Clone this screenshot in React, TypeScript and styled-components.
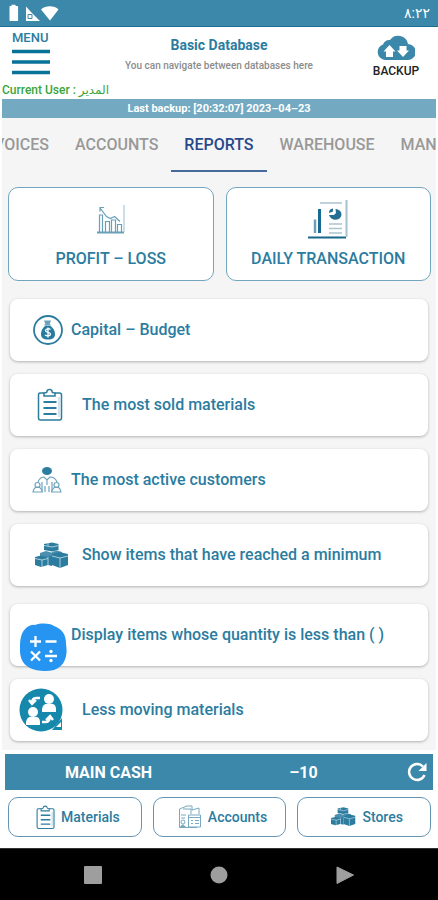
import React from "react";
import styled, { createGlobalStyle } from "styled-components";

const teal = "#2b7c9f";
const bar = "#3c88ab";

const GlobalStyle = createGlobalStyle`
  *, *::before, *::after { box-sizing: border-box; }
  body { margin: 0; background: #fff; font-family: Roboto, "Noto Sans", "DejaVu Sans", sans-serif; }
  button { font: inherit; color: inherit; background: none; border: 0; padding: 0; cursor: pointer; }
  svg { display: block; flex: none; }
  h1, p { margin: 0; }
`;

const Screen = styled.div`
  display: flex;
  flex-direction: column;
  min-height: 100vh;
  overflow: hidden;
  background: #fff;
`;

const StatusBar = styled.div`
  display: flex;
  align-items: center;
  justify-content: space-between;
  height: 27px;
  padding: 0 8px;
  background: ${bar};
  border-bottom: 1px solid #1c7096;
  color: #fff;
  font-size: 14px;
`;

const Header = styled.header`
  display: grid;
  grid-template-columns: 84px 1fr 84px;
  padding-top: 3px;
  height: 57px;
`;

const MenuButton = styled.button`
  display: flex;
  flex-direction: column;
  align-items: flex-start;
  padding-left: 12px;
  gap: 4px;
  color: ${teal};
  font-size: 13px;
  line-height: 15px;
  font-weight: 500;
`;

const Heading = styled.div`
  display: flex;
  flex-direction: column;
  align-items: center;
  padding-top: 7px;
  gap: 4px;
  white-space: nowrap;
`;

const Title = styled.h1`
  color: ${teal};
  font-size: 14px;
  line-height: 17px;
  font-weight: 700;
`;

const Subtitle = styled.p`
  color: #8c8c8c;
  font-size: 10px;
  line-height: 16px;
  font-weight: 500;
`;

const BackupButton = styled.button`
  display: flex;
  flex-direction: column;
  align-items: center;
  padding-top: 5px;
  gap: 3px;
  color: #222;
  font-size: 12px;
  line-height: 14px;
  font-weight: 500;
`;

const UserLine = styled.p`
  padding: 0 2px;
  color: #3ba53b;
  font-size: 12px;
  line-height: 12px;
  height: 15px;
  font-weight: 500;
  white-space: nowrap;
`;

const LastBackup = styled.p`
  margin: 0 2px;
  background: #73a9c1;
  color: #fff;
  text-align: center;
  font-size: 11px;
  line-height: 19px;
  font-weight: 700;
`;

const Body = styled.main`
  display: flex;
  flex-direction: column;
  margin: 0 2px;
  padding-bottom: 9px;
  background: #f5f5f5;
`;

const Tabs = styled.nav`
  display: flex;
  height: 54px;
  margin-right: -2px;
  overflow: hidden;
`;

const Tab = styled.button<{ $active?: boolean; $leading?: boolean }>`
  display: flex;
  flex: none;
  align-items: center;
  justify-content: flex-end;
  width: ${(p) => (p.$leading ? "60px" : "auto")};
  overflow: hidden;
  padding: 0 13px;
  padding-left: ${(p) => (p.$leading ? "0" : "13px")};
  border-bottom: 2px solid ${(p) => (p.$active ? "#456a9b" : "transparent")};
  color: ${(p) => (p.$active ? "#27498c" : "#999")};
  font-size: 16px;
  font-weight: 500;
`;

const Tiles = styled.div`
  display: grid;
  grid-template-columns: 1fr 1fr;
  gap: 12px;
  padding: 15px 5px 18px 6px;
`;

const Tile = styled.button`
  display: flex;
  flex-direction: column;
  align-items: center;
  justify-content: flex-end;
  gap: 10px;
  height: 94px;
  padding-bottom: 11px;
  background: #fff;
  border: 1px solid #72a6bf;
  border-radius: 10px;
  color: ${teal};
  font-size: 16px;
  line-height: 20px;
  font-weight: 500;
`;

const TileIcon = styled.span`
  display: flex;
  align-items: center;
  height: 40px;
`;

const List = styled.div`
  display: flex;
  flex-direction: column;
  gap: 13px;
  padding: 0 8px;

  & + & { padding-top: 18px; }
`;

const Row = styled.button<{ $indent?: boolean }>`
  position: relative;
  display: grid;
  grid-template-columns: ${(p) => (p.$indent ? "72px" : "61px")} 1fr;
  align-items: center;
  height: 62px;
  background: #fff;
  border-radius: 8px;
  box-shadow: 0 1px 3px rgba(0, 0, 0, 0.28);
  color: ${teal};
  font-size: 16px;
  line-height: 20px;
  font-weight: 500;
  text-align: left;
`;

const RowIcon = styled.span<{ $inset?: number }>`
  display: flex;
  padding-left: ${(p) => p.$inset ?? 22}px;
`;

const Floating = styled.span`
  position: absolute;
  left: 9px;
  top: 19px;
  z-index: 1;
`;

const CashBar = styled.div`
  display: grid;
  grid-template-columns: 1fr 1fr 32px;
  align-items: center;
  height: 36px;
  margin: 4px 5px 0;
  padding-left: 6px;
  background: ${bar};
  color: #fff;
  font-size: 16px;
  font-weight: 700;
  text-align: center;
`;

const RefreshButton = styled.button`
  display: flex;
  justify-content: center;
`;

const Shortcuts = styled.div`
  display: grid;
  grid-template-columns: repeat(3, 1fr);
  gap: 11px;
  padding: 7px 7px 11px 8px;
`;

const Shortcut = styled.button`
  display: flex;
  align-items: center;
  justify-content: center;
  gap: 6px;
  height: 40px;
  padding-left: 6px;
  border: 1px solid #6496b4;
  border-radius: 10px;
  color: ${teal};
  font-size: 14px;
  font-weight: 500;
`;

const NavBar = styled.nav`
  display: flex;
  flex: 1;
  align-items: center;
  justify-content: center;
  gap: 108px;
  min-height: 52px;
  background: #000;
  border-top: 1px solid #333;
`;

const StatusIcons = () => (
  <svg width="52" height="18" viewBox="0 0 52 18" fill="#fff">
    <path d="M3.500 2V.8h4V2h1.6c.6 0 1 .4 1 1v13c0 .6-.4 1-1 1H2.500c-.6 0-1-.4-1-1V3c0-.6.4-1 1-1z" />
    <path d="M18 2.500V17h14L23 8z" />
    <path d="M20 10.500h4v4h-4z" fill="none" stroke={bar} strokeWidth="1" />
    <path d="M33 5.500C37.500 1.200 46.500 1.200 50.500 5.500L42 16.500z" />
  </svg>
);

const MenuLines = () => (
  <svg width="38" height="26" viewBox="0 0 38 26" stroke="#087298" strokeWidth="3.500">
    <path d="M0 2.500h38M0 13h38M0 23.500h38" />
  </svg>
);

const CloudIcon = () => (
  <svg width="38" height="26" viewBox="0 0 38 26">
    <path d="M8 25a8 8 0 0 1-2-15.500A7 7 0 0 1 13 5a10 10 0 0 1 18 4 8 8 0 0 1-.5 16z" fill={bar} />
    <path d="m12.500 10 6 6.500h-2.500V22H9v-5.500H6.500zM26 22l-6-6.500h2.500V11h7v4.500H32z" fill="#fff" />
  </svg>
);

const ProfitIcon = () => (
  <svg width="30" height="30" viewBox="0 0 30 30" fill="none" stroke="#689fb9" strokeWidth="1.200">
    <path d="M1 28.500h27" strokeWidth="2" />
    <path d="M3.500 28V11h3v17M9.500 28V17.500h4V28M15.500 28V16h4v12M21.500 28v-7.500h4V28" />
    <path d="m4 4 6.500 8.500 4 2 4-2 5.500 5M4 7.500V3.500h4" />
    <path d="M28 1v27" stroke="#a9c9d8" />
  </svg>
);

const DailyIcon = () => (
  <svg width="40" height="40" viewBox="0 0 40 40" fill="none">
    <path d="M0 38.500h38" stroke="#1a668b" strokeWidth="2" />
    <path d="M38.500 1v37" stroke="#a4c2d0" strokeWidth="2" />
    <path d="M12 4h22M21 25h13M21 29.500h13M21 34h13" stroke="#aac4d0" strokeWidth="1.500" />
    <path d="M11.500 10v24" stroke="#176b92" strokeWidth="3" />
    <path d="M7 20.500V34" stroke="#6f9fb5" strokeWidth="2.500" />
    <path d="M27.500 10c5 .5 7 4 5.500 7.500-2.500 5-10.500 4-12-1.500h5l2-2z" fill="#236f94" />
    <path d="M21 14c0-2.500 1-4 4-4.500v3z" fill="#236f94" />
  </svg>
);

const MoneyIcon = () => (
  <svg width="32" height="32" viewBox="0 0 32 32" fill="none">
    <circle cx="16" cy="16" r="14" stroke={teal} strokeWidth="1.800" />
    <path d="M12 6.500h7l-1.500 4h-4z" fill="#6aa1bb" />
    <path d="M12.500 11h6" stroke={teal} />
    <path d="M13 12h5.500c3 2 4.500 5 4.500 8 0 4-2.500 5.500-7 5.500s-7-1.500-7-5.500c0-3 1.500-6 4-8z" fill="#277b9f" />
    <path d="M18.500 15.500c-2-1.500-5-.7-5 1.200 0 2 5 1.200 5 3.300 0 2-3.500 2.500-5.500 1M16 13.500v10" stroke="#fff" strokeWidth="1.300" />
  </svg>
);

const ClipboardIcon = ({ size = 34 }: { size?: number }) => (
  <svg width={(size * 26) / 34} height={size} viewBox="0 0 26 34" fill="none" stroke={teal} strokeWidth="1.500">
    <path d="M7 5H3Q1.500 5 1.500 7v23q0 2 2 2h19q2 0 2-2V7q0-2-2-2H18" />
    <path d="M7 8V5q3 0 3-1.500Q10 1.500 12.500 1.500T15 3.500Q15 5 18 5v3z" />
    <path d="M6.500 14h13M6.500 20h13M6.500 26h13" strokeWidth="2" />
    <path d="M22 9v20" stroke="#a7c8d8" strokeWidth="1" />
  </svg>
);

const CustomerIcon = () => (
  <svg width="30" height="28" viewBox="0 0 30 28" fill="none" stroke="#6fa4bd" strokeWidth="1.200">
    <ellipse cx="15" cy="5" rx="5" ry="4" fill={teal} stroke="none" />
    <path d="M6 16q2-5 6-5l3 3 3-3q5 0 7 5M15 14v5M10 16v9M20 16v9M13 20v6M17 20v6" />
    <circle cx="5.500" cy="19" r="2.500" />
    <circle cx="24.500" cy="19" r="2.500" />
    <path d="M1 26q1-5 4.500-5t5 5zM19.500 26q1.500-5 5-5t4.500 5z" />
  </svg>
);

const BoxesIcon = ({ size = 34 }: { size?: number }) => (
  <svg width={size} height={(size * 26) / 34} viewBox="0 0 34 26" fill={teal}>
    <path d="m9 2 8-1.500L23.500 2v6L17 9.500 9 8z" />
    <path d="m5 11 6-2 7 2v4H5zM17 10l5-1.500 5 1.500v2H17z" fill="#4c8faf" />
    <path d="m0 15 6-1.500 7 1.500v8l-7 2-6-2z" />
    <path d="m12 15 5-1.500V24l-4-1z" />
    <path d="m17 12 7-2 9 2v11l-8 3-8-3z" />
    <path d="M9 3.500 17 5l6.500-1.500M13 1v3M0 16.500 7 18l6-1.500M7 18v7M17 14l8 2 8-2M25 16v10M13 15v8" fill="none" stroke="#c8dfe9" strokeWidth=".8" />
  </svg>
);

const CalculatorIcon = () => (
  <svg width="49" height="49" viewBox="0 0 49 49">
    <path d="M16 2c6-2 14-2 19 1 8 3 12 8 12 18 2 12-1 22-12 26-8 2-18 1-24-2C3 41 .5 34 1 24 1 14 3 6 11 2.500q3-1 5-.5z" fill="#2595f1" />
    <path d="M11 18.500h11M16.500 13v11M26.500 18.500h11M12 28.500l9 9m0-9-9 9M26 33h12" stroke="#fff" strokeWidth="2.300" />
    <circle cx="32" cy="28.500" r="1.700" fill="#fff" />
    <circle cx="32" cy="37.500" r="1.700" fill="#fff" />
  </svg>
);

const ExchangeIcon = () => (
  <svg width="45" height="45" viewBox="0 0 45 45">
    <circle cx="22" cy="22" r="21.500" fill="#1688ac" />
    <path d="M43 30v12H33z" fill="#1688ac" />
    <g fill="#fff">
      <circle cx="30" cy="11" r="5" />
      <path d="M23 24v-3q1-6 7-5 7-1 7 5v3z" />
      <circle cx="14" cy="24" r="5" />
      <path d="M7 37v-3q1-6 7-5 7-1 7 5v3z" />
      <path d="m37 39 5-5v5z" />
    </g>
    <path d="M21 10h-4q-4 0-4 5m-3-3 3 4 4-4M23 34h4q4 0 4-6m-4 4 4-4 3 4" fill="none" stroke="#fff" strokeWidth="2.400" />
  </svg>
);

const AccountsIcon = () => (
  <svg width="24" height="24" viewBox="0 0 24 24" fill="none" stroke="#79a8c1" strokeWidth="1">
    <path d="M1.500 4 9 1h5v4M1.500 4v18.500H19M5 4h8v5M14 5l7-2v6M10.500 10h12v12h-12z" />
    <path d="M11 12.500h11M13 15.500h2m2 0h4M13 18.500h2m2 0h4M3 10h5M3 13h4" />
    <circle cx="5" cy="17" r="2" />
    <path d="M2.500 22q2-4 5 0" fill="#79a8c1" />
  </svg>
);

const RefreshIcon = () => (
  <svg width="20" height="20" viewBox="0 0 20 20" fill="none">
    <path d="M16 4.500A8 8 0 1 0 17.500 13" stroke="#fff" strokeWidth="2.500" />
    <path d="M19.500 1v8h-8z" fill="#fff" />
  </svg>
);

export default function App() {
  return (
    <Screen>
      <GlobalStyle />
      <StatusBar>
        <StatusIcons />
        <span>٨:٢٢</span>
      </StatusBar>
      <Header>
        <MenuButton>
          MENU
          <MenuLines />
        </MenuButton>
        <Heading>
          <Title>Basic Database</Title>
          <Subtitle>You can navigate between databases here</Subtitle>
        </Heading>
        <BackupButton>
          <CloudIcon />
          BACKUP
        </BackupButton>
      </Header>
      <UserLine>Current User : المدير</UserLine>
      <LastBackup>Last backup: [20:32:07] 2023–04–23</LastBackup>
      <Body>
        <Tabs>
          <Tab $leading>INVOICES</Tab>
          <Tab>ACCOUNTS</Tab>
          <Tab $active>REPORTS</Tab>
          <Tab>WAREHOUSE</Tab>
          <Tab>MAN</Tab>
        </Tabs>
        <Tiles>
          <Tile>
            <TileIcon><ProfitIcon /></TileIcon>
            PROFIT – LOSS
          </Tile>
          <Tile>
            <TileIcon><DailyIcon /></TileIcon>
            DAILY TRANSACTION
          </Tile>
        </Tiles>
        <List>
          <Row>
            <RowIcon><MoneyIcon /></RowIcon>
            Capital – Budget
          </Row>
          <Row $indent>
            <RowIcon $inset={27}><ClipboardIcon /></RowIcon>
            The most sold materials
          </Row>
          <Row>
            <RowIcon><CustomerIcon /></RowIcon>
            The most active customers
          </Row>
          <Row $indent>
            <RowIcon $inset={25}><BoxesIcon /></RowIcon>
            Show items that have reached a minimum
          </Row>
        </List>
        <List>
          <Row>
            <RowIcon><Floating><CalculatorIcon /></Floating></RowIcon>
            Display items whose quantity is less than ( )
          </Row>
          <Row $indent>
            <RowIcon $inset={9}><ExchangeIcon /></RowIcon>
            Less moving materials
          </Row>
        </List>
      </Body>
      <CashBar>
        <span>MAIN CASH</span>
        <span>–10</span>
        <RefreshButton aria-label="Refresh"><RefreshIcon /></RefreshButton>
      </CashBar>
      <Shortcuts>
        <Shortcut>
          <ClipboardIcon size={25} />
          Materials
        </Shortcut>
        <Shortcut>
          <AccountsIcon />
          Accounts
        </Shortcut>
        <Shortcut>
          <BoxesIcon size={25} />
          Stores
        </Shortcut>
      </Shortcuts>
      <NavBar>
        <button aria-label="Recent apps">
          <svg width="18" height="18"><rect width="18" height="18" rx="1" fill="#9e9e9e" /></svg>
        </button>
        <button aria-label="Home">
          <svg width="18" height="18"><circle cx="9" cy="9" r="8.500" fill="#9e9e9e" /></svg>
        </button>
        <button aria-label="Back">
          <svg width="18" height="18"><path d="M1 1v16.500L17.500 9z" fill="#9e9e9e" stroke="#9e9e9e" strokeLinejoin="round" /></svg>
        </button>
      </NavBar>
    </Screen>
  );
}
